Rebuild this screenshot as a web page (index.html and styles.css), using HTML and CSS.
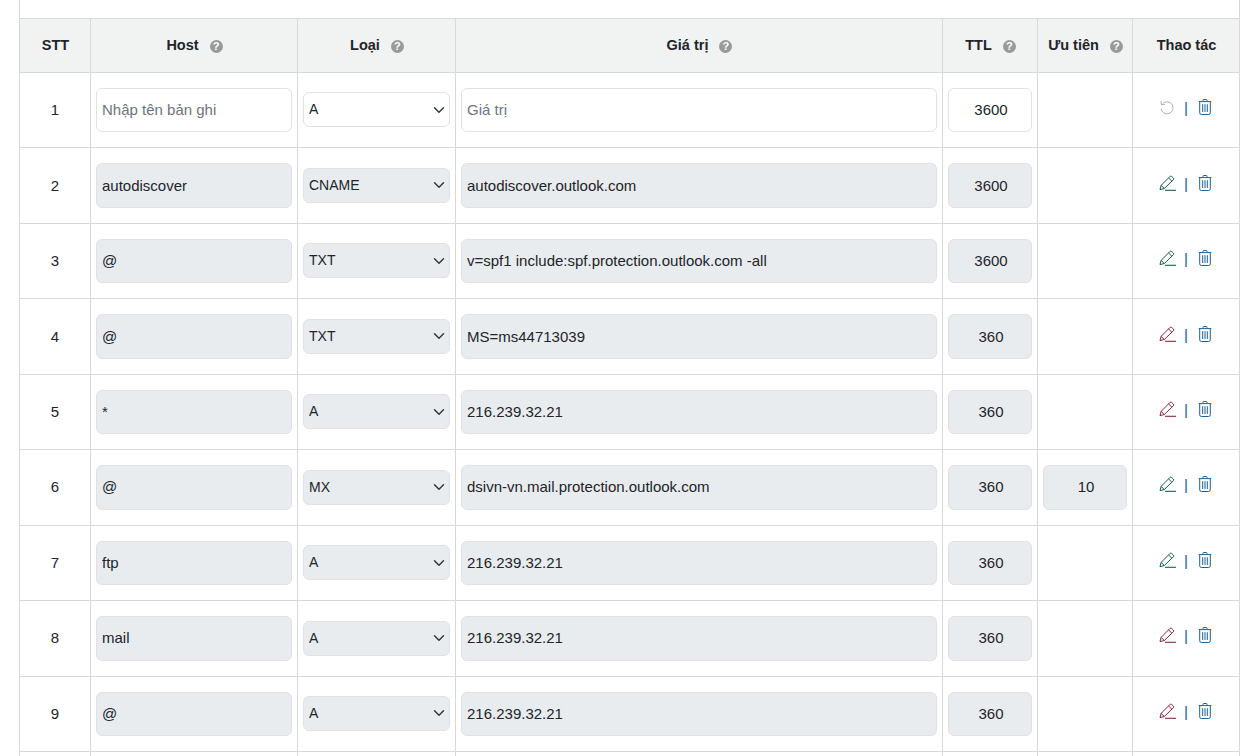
FILE: index.html
```html
<!DOCTYPE html>
<html lang="vi">
<head>
<meta charset="utf-8">
<title>Bản ghi DNS</title>
<link rel="stylesheet" href="styles.css">
</head>
<body>
<svg class="defs" width="0" height="0" aria-hidden="true">
  <symbol id="i-trash" viewBox="0 0 14 16">
    <path d="M5 2.2V1.3q0-.8.8-.8h2.400q.8 0 .8.8v.9" fill="none" stroke="currentColor"/>
    <path d="M.7 2.600h12.600M1.700 2.600v11.200q0 1.700 1.700 1.700h7.200q1.700 0 1.700-1.700V2.600" fill="none" stroke="currentColor"/>
    <path d="M4.700 5.200v7.800M7 5.200v7.800M9.300 5.200v7.800" fill="none" stroke="currentColor"/>
  </symbol>
  <symbol id="i-pencil" viewBox="0 0 17 16">
    <path d="M1 14.600l1.100-4.200L10.900 1.500q.9-.9 1.800 0l1.600 1.500q.9.900 0 1.800L5.300 13.500zM2.100 10.400l3.200 3.100M9.500 2.900l3.400 3.300" fill="none" stroke="currentColor" stroke-width="1"/>
    <path d="M6 15.300h11" fill="none" stroke="currentColor" stroke-width="1.100"/>
  </symbol>
  <symbol id="i-undo" viewBox="0 0 14 15">
    <path d="M2.800 3.600A6 6 0 1 1 1.100 8.500" fill="none" stroke="currentColor" stroke-width="1"/>
    <path d="M1.200.9v3.600h3.600" fill="none" stroke="currentColor" stroke-width="1"/>
  </symbol>
</svg>
<main class="panel">
  <table class="records">
    <colgroup>
      <col class="c-stt"><col class="c-host"><col class="c-type"><col class="c-value"><col class="c-ttl"><col class="c-prio"><col class="c-act">
    </colgroup>
    <thead>
      <tr>
        <th>STT</th>
        <th>Host<span class="help">?</span></th>
        <th>Loại<span class="help">?</span></th>
        <th>Giá trị<span class="help">?</span></th>
        <th>TTL<span class="help">?</span></th>
        <th>Ưu tiên<span class="help">?</span></th>
        <th>Thao tác</th>
      </tr>
    </thead>
    <tbody>
      <tr>
        <td>1</td>
        <td><input class="field" placeholder="Nhập tên bản ghi"></td>
        <td><select class="pick"><option>A</option></select></td>
        <td><input class="field" placeholder="Giá trị"></td>
        <td><input class="field mid" value="3600"></td>
        <td></td>
        <td><div class="acts"><svg class="ic undo"><use href="#i-undo"/></svg><span class="sep">|</span><svg class="ic trash"><use href="#i-trash"/></svg></div></td>
      </tr>
      <tr>
        <td>2</td>
        <td><input class="field off" value="autodiscover" readonly></td>
        <td><select class="pick off"><option>CNAME</option></select></td>
        <td><input class="field off" value="autodiscover.outlook.com" readonly></td>
        <td><input class="field off mid" value="3600" readonly></td>
        <td></td>
        <td><div class="acts"><svg class="ic pencil ok"><use href="#i-pencil"/></svg><span class="sep">|</span><svg class="ic trash"><use href="#i-trash"/></svg></div></td>
      </tr>
      <tr>
        <td>3</td>
        <td><input class="field off" value="@" readonly></td>
        <td><select class="pick off"><option>TXT</option></select></td>
        <td><input class="field off" value="v=spf1 include:spf.protection.outlook.com -all" readonly></td>
        <td><input class="field off mid" value="3600" readonly></td>
        <td></td>
        <td><div class="acts"><svg class="ic pencil ok"><use href="#i-pencil"/></svg><span class="sep">|</span><svg class="ic trash"><use href="#i-trash"/></svg></div></td>
      </tr>
      <tr>
        <td>4</td>
        <td><input class="field off" value="@" readonly></td>
        <td><select class="pick off"><option>TXT</option></select></td>
        <td><input class="field off" value="MS=ms44713039" readonly></td>
        <td><input class="field off mid" value="360" readonly></td>
        <td></td>
        <td><div class="acts"><svg class="ic pencil bad"><use href="#i-pencil"/></svg><span class="sep">|</span><svg class="ic trash"><use href="#i-trash"/></svg></div></td>
      </tr>
      <tr>
        <td>5</td>
        <td><input class="field off" value="*" readonly></td>
        <td><select class="pick off"><option>A</option></select></td>
        <td><input class="field off" value="216.239.32.21" readonly></td>
        <td><input class="field off mid" value="360" readonly></td>
        <td></td>
        <td><div class="acts"><svg class="ic pencil bad"><use href="#i-pencil"/></svg><span class="sep">|</span><svg class="ic trash"><use href="#i-trash"/></svg></div></td>
      </tr>
      <tr>
        <td>6</td>
        <td><input class="field off" value="@" readonly></td>
        <td><select class="pick off"><option>MX</option></select></td>
        <td><input class="field off" value="dsivn-vn.mail.protection.outlook.com" readonly></td>
        <td><input class="field off mid" value="360" readonly></td>
        <td><input class="field off mid" value="10" readonly></td>
        <td><div class="acts"><svg class="ic pencil ok"><use href="#i-pencil"/></svg><span class="sep">|</span><svg class="ic trash"><use href="#i-trash"/></svg></div></td>
      </tr>
      <tr>
        <td>7</td>
        <td><input class="field off" value="ftp" readonly></td>
        <td><select class="pick off"><option>A</option></select></td>
        <td><input class="field off" value="216.239.32.21" readonly></td>
        <td><input class="field off mid" value="360" readonly></td>
        <td></td>
        <td><div class="acts"><svg class="ic pencil ok"><use href="#i-pencil"/></svg><span class="sep">|</span><svg class="ic trash"><use href="#i-trash"/></svg></div></td>
      </tr>
      <tr>
        <td>8</td>
        <td><input class="field off" value="mail" readonly></td>
        <td><select class="pick off"><option>A</option></select></td>
        <td><input class="field off" value="216.239.32.21" readonly></td>
        <td><input class="field off mid" value="360" readonly></td>
        <td></td>
        <td><div class="acts"><svg class="ic pencil bad"><use href="#i-pencil"/></svg><span class="sep">|</span><svg class="ic trash"><use href="#i-trash"/></svg></div></td>
      </tr>
      <tr>
        <td>9</td>
        <td><input class="field off" value="@" readonly></td>
        <td><select class="pick off"><option>A</option></select></td>
        <td><input class="field off" value="216.239.32.21" readonly></td>
        <td><input class="field off mid" value="360" readonly></td>
        <td></td>
        <td><div class="acts"><svg class="ic pencil bad"><use href="#i-pencil"/></svg><span class="sep">|</span><svg class="ic trash"><use href="#i-trash"/></svg></div></td>
      </tr>
      <tr class="cut"><td></td><td></td><td></td><td></td><td></td><td></td><td></td></tr>
    </tbody>
  </table>
</main>
</body>
</html>
```
FILE: styles.css
```css
* { box-sizing: border-box; }
html, body { height: 756px; overflow: hidden; }
body {
  margin: 0;
  background: #fff;
  color: #212529;
  font-family: "Liberation Sans", Arial, sans-serif;
  font-size: 15px;
}
.defs { position: absolute; }
.panel {
  width: 1221px;
  margin-left: 19px;
  padding-top: 18px;
  border-left: 1px solid #d8d8d8;
  border-right: 1px solid #d8d8d8;
}
.records {
  width: 1219px;
  table-layout: fixed;
  border-collapse: separate;
  border-spacing: 0;
}
.c-stt { width: 71px; }
.c-host { width: 207px; }
.c-type { width: 158px; }
.c-value { width: 487px; }
.c-ttl { width: 95px; }
.c-prio { width: 95px; }
.c-act { width: 106px; }
th, td {
  border-right: 1px solid #d8d8d8;
  border-bottom: 1px solid #d8d8d8;
  text-align: center;
}
th:last-child, td:last-child { border-right: 0; }
th {
  height: 55px;
  padding: 0 0 1px 1px;
  border-top: 1px solid #d8d8d8;
  background: #f1f2f2;
  font-size: 14.5px;
  font-weight: 700;
  white-space: nowrap;
}
td { padding: 15px 5px; height: 75.45px; }
td:first-child { padding: 14.5px 5px 15.5px; }
.help {
  display: inline-block;
  width: 13px;
  height: 13px;
  margin-left: 11px;
  border-radius: 50%;
  background: #999;
  color: #fff;
  font-size: 11px;
  line-height: 13px;
  font-weight: 700;
  vertical-align: 0;
}
.field {
  display: block;
  width: 100%;
  height: 44.45px;
  padding: 0 5px 1px;
  border: 1px solid #dee2e6;
  border-radius: 6px;
  background: #fff;
  color: #212529;
  font: 15px "Liberation Sans", Arial, sans-serif;
  outline: 0;
}
.field::placeholder { color: #6c757d; opacity: 1; }
.mid { text-align: center; padding: 0 4px 1px 6px; }
.pick {
  display: block;
  width: 100%;
  height: 35px;
  margin-bottom: .5px;
  padding: 0 28px 1px 5px;
  border: 1px solid #dee2e6;
  border-radius: 6px;
  background: #fff url("data:image/svg+xml,%3Csvg xmlns='http://www.w3.org/2000/svg' viewBox='0 0 16 16'%3E%3Cpath fill='none' stroke='%23343a40' stroke-linecap='round' stroke-linejoin='round' stroke-width='2' d='M2 5l6 6 6-6'/%3E%3C/svg%3E") no-repeat right 4px center / 12px 12px;
  color: #212529;
  font: 14px "Liberation Sans", Arial, sans-serif;
  appearance: none;
  -webkit-appearance: none;
}
.off { background-color: #e9ecef; }
.acts {
  display: grid;
  grid-template-columns: 1fr auto 1fr;
  column-gap: 10px;
  align-items: center;
}
.ic { display: block; margin-top: -6px; }
.undo { width: 14px; height: 15px; color: #b0b0b0; justify-self: end; }
.trash { width: 14px; height: 16px; color: #17629c; justify-self: start; }
.pencil { width: 17px; height: 16px; margin-right: -2px; justify-self: end; }
.ok { color: #14604e; }
.bad { color: #8f2438; }
.sep { color: #0d5cab; font-size: 15px; line-height: 16px; margin-top: -4px; }
.cut td { height: 20px; padding: 0; }
```
